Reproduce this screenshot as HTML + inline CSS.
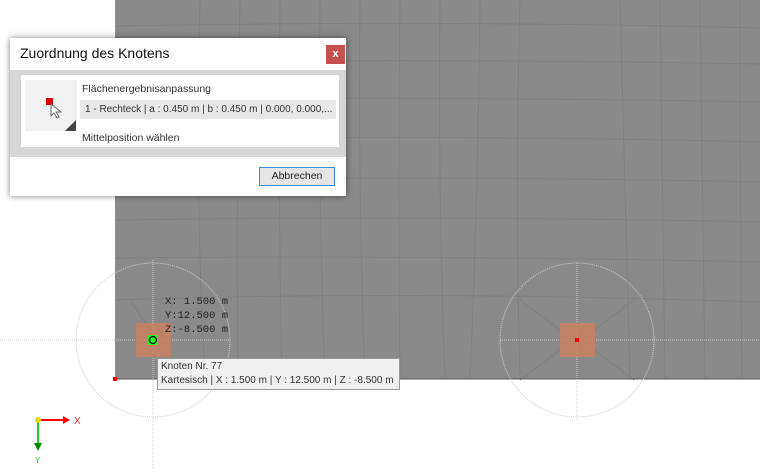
<!DOCTYPE html>
<html><head><meta charset="utf-8"><style>
body{margin:0;width:760px;height:473px;overflow:hidden;background:#fff;position:relative;font-family:"Liberation Sans",sans-serif}
.a{position:absolute;white-space:nowrap}
</style></head><body>
<svg class="a" style="left:0;top:0" width="760" height="473">
<rect x="115" y="0" width="645" height="379" fill="#8a8a8a"/>
<g stroke="#808080" stroke-width="1" fill="none">
<path d="M115 26 Q440 20 760 28"/><path d="M115 63 Q440 58 760 64"/><path d="M115 100 Q440 96 760 102"/><path d="M115 140 Q440 134 760 142"/><path d="M115 180 Q440 175 760 182"/><path d="M115 220 Q440 215 760 222"/><path d="M115 258 Q440 255 760 262"/><path d="M115 300 Q400 290 760 302"/>
<path d="M200 0 Q195 200 205 379"/><path d="M240 0 Q236 200 238 379"/><path d="M280 0 Q278 200 282 379"/><path d="M320 0 Q318 200 325 379"/><path d="M360 0 Q358 200 365 379"/><path d="M400 0 Q398 200 400 379"/><path d="M440 0 Q438 200 445 379"/><path d="M480 0 Q478 200 470 379"/><path d="M520 0 Q515 200 520 379"/><path d="M620 0 Q625 200 630 379"/><path d="M660 0 Q662 200 665 379"/><path d="M700 0 Q702 200 705 379"/><path d="M740 0 Q740 200 742 379"/>
<path d="M520 300 L560 330 M634 300 L594 330 M520 380 L560 350 M634 380 L594 350"/>
<path d="M130 300 L150 330 M175 300 L158 330"/>
</g>
<line x1="115" y1="379" x2="760" y2="379" stroke="#555"/>
<g stroke="#cfcfcf" fill="none" stroke-dasharray="1 1" stroke-width="1">
<circle cx="577" cy="340" r="77"/><circle cx="153" cy="340" r="77"/>
<line x1="577" y1="263" x2="577" y2="420"/><line x1="500" y1="340" x2="760" y2="340"/>
<line x1="153" y1="260" x2="153" y2="470"/><line x1="0" y1="340" x2="230" y2="340"/>
</g>
<rect x="560" y="323" width="35" height="34" fill="#c98060" opacity="0.85"/>
<rect x="575" y="338" width="4" height="4" fill="#f00"/>
<rect x="136" y="323" width="35" height="34" fill="#c98060" opacity="0.85"/>
<rect x="148" y="335" width="10" height="10" fill="#2f2"/>
<circle cx="153" cy="340" r="3.5" fill="none" stroke="#222" stroke-width="1.5"/>
<rect x="113" y="377" width="4" height="4" fill="#f00"/>
<line x1="38" y1="420" x2="66" y2="420" stroke="#f00" stroke-width="2"/><path d="M63 416 L70 420 L63 424Z" fill="#f00"/>
<line x1="38" y1="420" x2="38" y2="446" stroke="#2c2" stroke-width="2"/><path d="M34 443 L38 451 L42 443Z" fill="#080"/>
<circle cx="38" cy="420" r="3" fill="#dd0"/>
<text x="74" y="424" fill="#f33" font-size="10" font-family="Liberation Sans">X</text>
<text x="35" y="463" fill="#2c2" font-size="8" font-family="Liberation Sans">Y</text>
<g font-family="Liberation Mono" font-size="10.5" fill="#222">
<text x="165" y="304">X: 1.500 m</text><text x="165" y="318">Y:12.500 m</text><text x="165" y="332">Z:-8.500 m</text></g>
</svg>
<div class="a" style="left:157px;top:358px;width:243px;height:32px;background:#f0f0f0;border:1px solid #999;font-size:10px;color:#333;line-height:14px;padding:1px 3px;box-sizing:border-box;overflow:hidden">Knoten Nr. 77<br>Kartesisch | X : 1.500 m | Y : 12.500 m | Z : -8.500 m</div>
<div class="a" style="left:10px;top:38px;width:336px;height:158px;background:#fff;box-shadow:0 0 6px rgba(0,0,0,.5);font-size:10.5px;color:#333">
<div class="a" style="left:10px;top:7px;font-size:14px;color:#111">Zuordnung des Knotens</div>
<div class="a" style="left:316px;top:7px;width:19px;height:19px;background:#c75050;color:#fff;text-align:center;line-height:18px;font-size:11px;font-weight:bold">x</div>
<div class="a" style="left:0;top:32px;width:336px;height:87px;background:#d6d6d6"></div>
<div class="a" style="left:11px;top:37px;width:318px;height:72px;background:#fff">
<div class="a" style="left:4px;top:5px;width:52px;height:51px;background:#f2f2f2">
<div class="a" style="left:21px;top:18px;width:7px;height:7px;background:#d00"></div>
<svg class="a" style="left:24px;top:22px" width="16" height="18"><path d="M2 2 L2 14 L5 11 L8 16 L10 15 L7 10 L12 10Z" fill="#fff" stroke="#666"/></svg>
<svg class="a" style="left:40px;top:40px" width="11" height="11"><path d="M11 0 L11 11 L0 11Z" fill="#444"/></svg></div>
<div class="a" style="left:61px;top:8px">Flächenergebnisanpassung</div>
<div class="a" style="left:59px;top:25px;width:256px;height:19px;background:#e8e8e8;line-height:19px;padding-left:5px;box-sizing:border-box;overflow:hidden;font-size:10px">1 - Rechteck | a : 0.450 m | b : 0.450 m | 0.000, 0.000,...</div>
<div class="a" style="left:61px;top:57px">Mittelposition wählen</div></div>
<div class="a" style="left:249px;top:129px;width:76px;height:19px;border:1px solid #3c8fe0;background:#e5e5e5;box-sizing:border-box;text-align:center;line-height:17px;color:#222">Abbrechen</div>
</div>
</body></html>
